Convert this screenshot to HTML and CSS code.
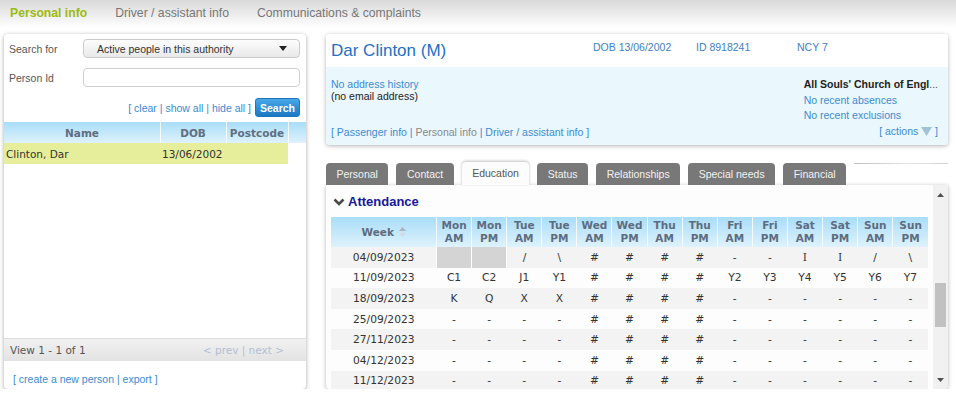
FILE: index.html
```html
<!DOCTYPE html>
<html lang="en">

<head>
    <meta charset="UTF-8">
    <meta name="viewport" content="width=device-width, initial-scale=1.0">
    <title>Passenger - Personal info</title>
    <link rel="stylesheet" href="styles.css">
</head>

<body>
    <!-- Top navigation -->
    <nav class="top-nav">
        <a class="top-link active">Personal info</a>
        <a class="top-link">Driver / assistant info</a>
        <a class="top-link">Communications &amp; complaints</a>
    </nav>

    <div class="layout">
        <!-- Search panel -->
        <aside class="search-panel">
            <div class="search-form">
                <label>Search for</label>
                <div class="select">
                    <span>Active people in this authority</span>
                    <svg width="8" height="5" viewBox="0 0 8 5"><path d="M0 0h8L4 5z" fill="#222"/></svg>
                </div>
                <label>Person Id</label>
                <input type="text" class="text-input">
            </div>
            <div class="search-actions">
                <span class="link-group">[ <a>clear</a> | <a>show all</a> | <a>hide all</a> ]</span>
                <button class="search-button">Search</button>
            </div>

            <div class="results">
                <table class="results-table">
                    <colgroup>
                        <col class="col-name">
                        <col class="col-dob">
                        <col class="col-post">
                        <col class="col-fill">
                    </colgroup>
                    <thead>
                        <tr>
                            <th>Name</th>
                            <th>DOB</th>
                            <th>Postcode</th>
                            <th></th>
                        </tr>
                    </thead>
                    <tbody>
                        <tr class="selected">
                            <td>Clinton, Dar</td>
                            <td>13/06/2002</td>
                            <td></td>
                            <td class="fill"></td>
                        </tr>
                    </tbody>
                </table>
            </div>

            <div class="pager">
                <span>View 1 - 1 of 1</span>
                <span class="pager-nav">&lt; prev | next &gt;</span>
            </div>
            <div class="panel-footer">
                <a>[ create a new person</a> | <a>export ]</a>
            </div>
        </aside>

        <main class="person-main">
            <!-- Person summary card -->
            <section class="person-card">
                <div class="person-head">
                    <h1 class="person-name">Dar Clinton (M)</h1>
                    <div class="person-meta">
                        <span>DOB 13/06/2002</span>
                        <span>ID 8918241</span>
                        <span>NCY 7</span>
                    </div>
                </div>
                <div class="person-body">
                    <div class="person-left">
                        <div class="address">
                            <a>No address history</a><br>
                            (no email address)
                        </div>
                        <div class="switch-links">
                            [ <a>Passenger info</a> | <span class="current">Personal info</span> | <a>Driver / assistant info</a> ]
                        </div>
                    </div>
                    <div class="person-right">
                        <div class="school">All Souls' Church of Engl<span class="dots">...</span></div>
                        <a>No recent absences</a>
                        <a>No recent exclusions</a>
                        <div class="actions">
                            <a>[ actions
                                <svg width="11" height="9" viewBox="0 0 11 9"><path d="M0 0h11L5.5 9z" fill="#9fc4d6"/></svg>
                                ]</a>
                        </div>
                    </div>
                </div>
            </section>

            <!-- Tabs -->
            <div class="tabs">
                <div class="tab">Personal</div>
                <div class="tab">Contact</div>
                <div class="tab active">Education</div>
                <div class="tab">Status</div>
                <div class="tab">Relationships</div>
                <div class="tab">Special needs</div>
                <div class="tab">Financial</div>
                <div class="tab-line"></div>
            </div>

            <section class="tab-panel">
                <div class="panel-content">
                    <h2 class="section-title">
                        <svg width="12" height="8" viewBox="0 0 12 8"><path d="M1.5 1.5l4.5 4.5 4.5-4.5" fill="none" stroke="#4a4a4a" stroke-width="2.6"/></svg>
                        Attendance
                    </h2>
                    <table class="attendance">
                        <thead>
                            <tr>
                                <th class="col-week">Week
                                    <svg class="sort-icon" width="7" height="10" viewBox="0 0 7 10"><path d="M0 4L3.5 0 7 4z" fill="#a9b3bd"/><path d="M0 6h7L3.5 10z" fill="#d3dbe2"/></svg>
                                </th>
                                <th>Mon<br>AM</th><th>Mon<br>PM</th>
                                <th>Tue<br>AM</th><th>Tue<br>PM</th>
                                <th>Wed<br>AM</th><th>Wed<br>PM</th>
                                <th>Thu<br>AM</th><th>Thu<br>PM</th>
                                <th>Fri<br>AM</th><th>Fri<br>PM</th>
                                <th>Sat<br>AM</th><th>Sat<br>PM</th>
                                <th>Sun<br>AM</th><th>Sun<br>PM</th>
                            </tr>
                        </thead>
                        <tbody>
                            <tr>
                                <td>04/09/2023</td>
                                <td class="closed"></td><td class="closed"></td>
                                <td>/</td><td>\</td><td>#</td><td>#</td><td>#</td><td>#</td>
                                <td>-</td><td>-</td><td class="serif">I</td><td class="serif">I</td><td>/</td><td>\</td>
                            </tr>
                            <tr>
                                <td>11/09/2023</td>
                                <td>C1</td><td>C2</td><td>J1</td><td>Y1</td><td>#</td><td>#</td><td>#</td><td>#</td>
                                <td>Y2</td><td>Y3</td><td>Y4</td><td>Y5</td><td>Y6</td><td>Y7</td>
                            </tr>
                            <tr>
                                <td>18/09/2023</td>
                                <td>K</td><td>Q</td><td>X</td><td>X</td><td>#</td><td>#</td><td>#</td><td>#</td>
                                <td>-</td><td>-</td><td>-</td><td>-</td><td>-</td><td>-</td>
                            </tr>
                            <tr>
                                <td>25/09/2023</td>
                                <td>-</td><td>-</td><td>-</td><td>-</td><td>#</td><td>#</td><td>#</td><td>#</td>
                                <td>-</td><td>-</td><td>-</td><td>-</td><td>-</td><td>-</td>
                            </tr>
                            <tr>
                                <td>27/11/2023</td>
                                <td>-</td><td>-</td><td>-</td><td>-</td><td>#</td><td>#</td><td>#</td><td>#</td>
                                <td>-</td><td>-</td><td>-</td><td>-</td><td>-</td><td>-</td>
                            </tr>
                            <tr>
                                <td>04/12/2023</td>
                                <td>-</td><td>-</td><td>-</td><td>-</td><td>#</td><td>#</td><td>#</td><td>#</td>
                                <td>-</td><td>-</td><td>-</td><td>-</td><td>-</td><td>-</td>
                            </tr>
                            <tr>
                                <td>11/12/2023</td>
                                <td>-</td><td>-</td><td>-</td><td>-</td><td>#</td><td>#</td><td>#</td><td>#</td>
                                <td>-</td><td>-</td><td>-</td><td>-</td><td>-</td><td>-</td>
                            </tr>
                        </tbody>
                    </table>
                </div>

                <!-- Scrollbar -->
                <div class="scrollbar">
                    <div class="scroll-btn up">
                        <svg width="7" height="4" viewBox="0 0 7 4"><path d="M0 4L3.5 0 7 4z" fill="#505050"/></svg>
                    </div>
                    <div class="scroll-track"><div class="scroll-thumb"></div></div>
                    <div class="scroll-btn down">
                        <svg width="7" height="4" viewBox="0 0 7 4"><path d="M0 0h7L3.5 4z" fill="#505050"/></svg>
                    </div>
                </div>
            </section>
        </main>
    </div>
</body>

</html>
```

FILE: styles.css
```css
/* Base Styles */
body {
    margin: 0;
    font-family: "Liberation Sans", Arial, sans-serif;
    font-size: 10.5px;
    color: #222;
    background-color: #fff;
}

a {
    color: #3a8bd2;
    text-decoration: none;
}

/* Top navigation */
.top-nav {
    height: 28px;
    box-sizing: border-box;
    display: flex;
    align-items: center;
    gap: 28px;
    padding: 0 0 2px 10px;
    background: linear-gradient(#d9d9d9, #ffffff);
    font-size: 12.2px;
}

.top-link {
    color: #777;
}

.top-link.active {
    color: #9dba12;
    font-weight: bold;
}

.layout {
    display: flex;
    align-items: flex-start;
    gap: 20px;
    padding: 6px 8px 0 4px;
}

/* Search panel */
.search-panel {
    width: 302px;
    height: 355px;
    display: flex;
    flex-direction: column;
    background-color: #fff;
    border-radius: 4px;
    box-shadow: 0 1px 4px rgba(0, 0, 0, 0.35);
    overflow: hidden;
}

.search-form {
    display: grid;
    grid-template-columns: 74px 1fr;
    row-gap: 10px;
    align-items: center;
    padding: 5px 6px 0 5px;
    color: #555;
}

.select {
    height: 19px;
    box-sizing: border-box;
    display: flex;
    align-items: center;
    justify-content: space-between;
    padding: 0 12px 0 13px;
    border: 1px solid #cbcbcb;
    border-radius: 4px;
    background: linear-gradient(#fdfdfd, #e9e9e9);
    color: #333;
}

.text-input {
    height: 19px;
    box-sizing: border-box;
    margin: 0;
    border: 1px solid #cfcfcf;
    border-radius: 4px;
    background: #fff;
}

.search-actions {
    display: flex;
    justify-content: flex-end;
    align-items: center;
    gap: 4px;
    padding: 11px 6px 0;
    color: #3a8bd2;
}

.search-button {
    height: 19px;
    width: 45px;
    padding: 0;
    border: 1px solid #1f76bd;
    border-radius: 3px;
    background: linear-gradient(#4aa7e8, #1b78c3);
    color: #fff;
    font-family: "Liberation Sans", Arial, sans-serif;
    font-size: 10.5px;
    font-weight: bold;
}

.results {
    flex: 1;
    margin-top: 5px;
}

.results-table {
    width: 302px;
    border-collapse: collapse;
    table-layout: fixed;
    font-family: "DejaVu Sans", Verdana, sans-serif;
    font-size: 10.5px;
}

.results-table .col-name { width: 156px; }
.results-table .col-dob { width: 66px; }
.results-table .col-post { width: 62px; }
.results-table .col-fill { width: 18px; }

.results-table th {
    height: 21px;
    padding: 0;
    background: linear-gradient(#a9ddf8, #def2fc);
    color: #5f6e82;
    font-weight: bold;
    box-shadow: inset 1px 0 rgba(255, 255, 255, 0.8);
}

.results-table th:first-child {
    box-shadow: none;
}

.results-table td {
    height: 21px;
    padding: 0 2px;
    color: #333;
}

.results-table tr.selected td {
    background-color: #e6ee9c;
}

.results-table tr.selected td.fill {
    background-color: #fff;
}

.pager {
    height: 23px;
    box-sizing: border-box;
    display: flex;
    align-items: center;
    justify-content: space-between;
    padding: 0 22px 0 6px;
    border-top: 1px solid #dcdcdc;
    background: linear-gradient(#f1f1f1, #e3e3e3);
    font-family: "DejaVu Sans", Verdana, sans-serif;
    color: #555;
}

.pager-nav {
    color: #b3bfd3;
}

.panel-footer {
    height: 28px;
    box-sizing: border-box;
    padding: 12px 9px 0;
    color: #3a8bd2;
}

/* Person card */
.person-main {
    flex: 1;
}

.person-card {
    border-radius: 4px;
    box-shadow: 0 1px 4px rgba(0, 0, 0, 0.3);
    overflow: hidden;
}

.person-head {
    height: 33px;
    display: flex;
    align-items: flex-start;
    padding-left: 5px;
    background-color: #fff;
}

.person-name {
    flex: 1;
    margin: 0;
    font-size: 17px;
    font-weight: normal;
    line-height: 34px;
    color: #2170c6;
}

.person-meta {
    display: grid;
    grid-template-columns: 103px 101px 151px;
    padding-top: 7px;
    line-height: 13px;
    color: #3d80c8;
}

.person-body {
    height: 78px;
    box-sizing: border-box;
    display: flex;
    justify-content: space-between;
    padding: 10px 10px 5px 5px;
    background-color: #eaf7fd;
}

.person-left {
    display: flex;
    flex-direction: column;
    justify-content: space-between;
}

.address {
    padding-top: 1px;
    line-height: 12px;
    color: #222;
}

.switch-links {
    line-height: 15.5px;
    color: #3a8bd2;
}

.switch-links .current {
    color: #888;
}

.person-right {
    display: flex;
    flex-direction: column;
    line-height: 15.5px;
    white-space: nowrap;
}

.school {
    font-weight: bold;
    color: #222;
}

.school .dots {
    font-weight: normal;
    color: #555;
}

.actions {
    text-align: right;
}

.actions svg {
    vertical-align: -1px;
}

/* Tabs */
.tabs {
    height: 23px;
    display: flex;
    align-items: flex-end;
    gap: 8px;
    margin-top: 17px;
}

.tab {
    height: 22px;
    line-height: 22px;
    padding: 0 10.5px;
    border-radius: 4px 4px 0 0;
    background-color: #787878;
    color: #f2f2f2;
}

.tab.active {
    height: 23px;
    line-height: 23px;
    background-color: #fcfcfc;
    color: #555;
    box-shadow: 0 -1px 3px rgba(0, 0, 0, 0.25);
}

.tab-line {
    flex: 1;
    align-self: flex-start;
    height: 1px;
    margin-top: 1px;
    background: linear-gradient(to right, #bdbdbd, #e6e6e6 60%, #d0d0d0);
}

.tab-panel {
    height: 204px;
    display: flex;
    background-color: #fdfdfd;
    border-radius: 0 0 4px 4px;
    box-shadow: 0 1px 4px rgba(0, 0, 0, 0.3);
    overflow: hidden;
}

.panel-content {
    flex: 1;
    padding-left: 5px;
    overflow: hidden;
}

.section-title {
    display: flex;
    align-items: center;
    gap: 3px;
    margin: 0 0 7px;
    padding: 9px 0 0 2px;
    line-height: 16px;
    font-size: 13px;
    color: #17179a;
}

/* Attendance table */
.attendance {
    width: 597px;
    border-collapse: collapse;
    table-layout: fixed;
    font-family: "DejaVu Sans", Verdana, sans-serif;
    font-size: 10.7px;
    text-align: center;
}

.attendance th {
    height: 30px;
    padding: 0;
    line-height: 13px;
    font-size: 10.5px;
    color: #5d6c80;
    background: linear-gradient(#a9ddf8, #def2fc);
    border-left: 1px solid rgba(255, 255, 255, 0.8);
}

.attendance th.col-week {
    width: 105px;
    border-left: none;
}

.sort-icon {
    vertical-align: -1px;
    margin-left: 1px;
}

.attendance td {
    height: 20.6px;
    padding: 0;
    color: #333;
}

.attendance td.serif {
    font-family: "DejaVu Serif", serif;
}

.attendance tbody tr:nth-child(odd) td {
    background-color: #f3f3f3;
}

.attendance td.closed,
.attendance tbody tr:nth-child(odd) td.closed {
    background-color: #d4d4d4;
    border-left: 1px solid #fff;
    border-right: 1px solid #fff;
}

/* Scrollbar */
.scrollbar {
    width: 15px;
    display: flex;
    flex-direction: column;
    background-color: #f1f1f1;
}

.scroll-btn {
    display: flex;
    align-items: center;
    justify-content: center;
}

.scroll-btn.up {
    height: 20px;
}

.scroll-btn.down {
    height: 18px;
}

.scroll-track {
    flex: 1;
}

.scroll-thumb {
    height: 44px;
    margin: 78px 2px 0;
    background-color: #c1c1c1;
}
```
